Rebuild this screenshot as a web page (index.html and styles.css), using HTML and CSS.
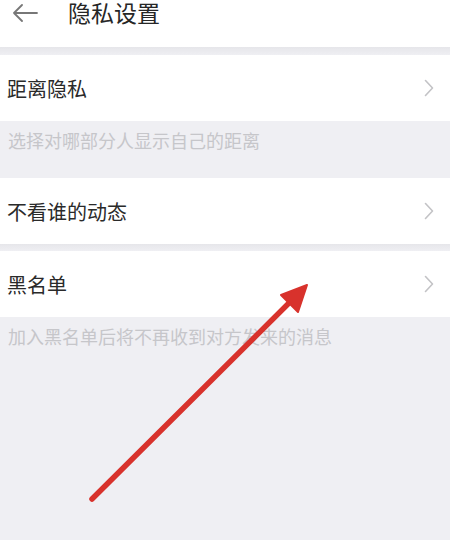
FILE: index.html
```html
<!DOCTYPE html>
<html lang="zh">
<head>
<meta charset="utf-8">
<link rel="stylesheet" href="styles.css">
</head>
<body>
<div class="page">
  <header class="topbar">
    <svg class="back" width="26" height="18" viewBox="0 0 26 18"><path d="M25 9H2M10 1L2 9l8 8" fill="none" stroke="#777" stroke-width="1.8" stroke-linecap="round" stroke-linejoin="round"/></svg>
    <h1 class="title">隐私设置</h1>
  </header>
  <div class="gap"></div>
  <div class="row"><span class="label">距离隐私</span><svg class="chev" width="10" height="18" viewBox="0 0 10 18"><path d="M1.5 1.5L8.5 9l-7 7.5" fill="none" stroke="#c3c3c6" stroke-width="1.6" stroke-linecap="round" stroke-linejoin="round"/></svg></div>
  <div class="desc">选择对哪部分人显示自己的距离</div>
  <div class="row"><span class="label">不看谁的动态</span><svg class="chev" width="10" height="18" viewBox="0 0 10 18"><path d="M1.5 1.5L8.5 9l-7 7.5" fill="none" stroke="#c3c3c6" stroke-width="1.6" stroke-linecap="round" stroke-linejoin="round"/></svg></div>
  <div class="gap small"></div>
  <div class="row"><span class="label">黑名单</span><svg class="chev" width="10" height="18" viewBox="0 0 10 18"><path d="M1.5 1.5L8.5 9l-7 7.5" fill="none" stroke="#c3c3c6" stroke-width="1.6" stroke-linecap="round" stroke-linejoin="round"/></svg></div>
  <div class="desc">加入黑名单后将不再收到对方发来的消息</div>
  <svg class="arrow" width="450" height="540" viewBox="0 0 450 540"><line x1="92" y1="499" x2="290" y2="302" stroke="#d8322c" stroke-width="5.5" stroke-linecap="round"/><polygon points="307,285 281,295 298,312" fill="#d8322c" stroke="#d8322c" stroke-width="2" stroke-linejoin="round"/></svg>
</div>
</body>
</html>
```
FILE: styles.css
```css
html, body { margin: 0; padding: 0; }
body {
  width: 450px;
  height: 540px;
  overflow: hidden;
  background: #efeff3;
  font-family: "Noto Sans CJK SC", "Noto Sans", sans-serif;
}
.page { position: relative; width: 450px; height: 540px; }
.topbar {
  height: 47px;
  background: #fff;
  display: flex;
  align-items: flex-start;
}
.back { margin: 4px 0 0 12px; }
.title {
  margin: 0 0 0 30px;
  font-size: 23px;
  line-height: 24px;
  font-weight: 400;
  color: #262626;
}
.gap { height: 8px; background: linear-gradient(#e6e6ea, #efeff3); }
.gap.small { height: 7px; }
.row {
  height: 66px;
  background: #fff;
  display: flex;
  align-items: center;
  justify-content: space-between;
  padding: 0 16px 0 7px;
}
.label { font-size: 20px; color: #2a2a2a; }
.desc {
  height: 57px;
  padding: 7px 0 0 8px;
  box-sizing: border-box;
  font-size: 18px;
  line-height: 24px;
  color: #c6c6ca;
}
.arrow { position: absolute; left: 0; top: 0; }
```
